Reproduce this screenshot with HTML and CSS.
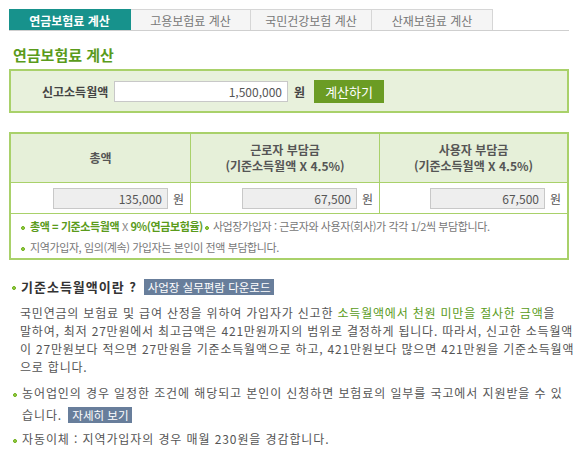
FILE: index.html
```html
<!DOCTYPE html>
<html lang="ko">
<head>
  <meta charset="UTF-8">
  <title>연금보험료 계산</title>
  <link rel="stylesheet" href="styles.css">
</head>
<body>
  <div class="wrap">
    <ul class="tabs">
      <li class="on">연금보험료 계산</li>
      <li>고용보험료 계산</li>
      <li class="wide">국민건강보험 계산</li>
      <li class="wide">산재보험료 계산</li>
    </ul>

    <h2 class="title">연금보험료 계산</h2>

    <div class="calc-box">
      <span class="calc-label">신고소득월액</span>
      <input type="text" class="calc-input" value="1,500,000">
      <span class="unit bold">원</span>
      <button class="btn-calc">계산하기</button>
    </div>

    <table class="result">
      <tr>
        <th class="c1">총액</th>
        <th class="c2">근로자 부담금<br>(기준소득월액 X 4.5%)</th>
        <th class="c3">사용자 부담금<br>(기준소득월액 X 4.5%)</th>
      </tr>
      <tr class="vals">
        <td><input type="text" class="out" value="135,000" readonly><span class="unit">원</span></td>
        <td><input type="text" class="out" value="67,500" readonly><span class="unit">원</span></td>
        <td><input type="text" class="out" value="67,500" readonly><span class="unit">원</span></td>
      </tr>
      <tr>
        <td colspan="3" class="notes">
          <p><span class="dot"></span><b class="green">총액 = 기준소득월액 <span class="x">X</span> 9%(연금보험율)</b><span class="dot inline"></span>사업장가입자 : 근로자와 사용자(회사)가 각각 1/2씩 부담합니다.</p>
          <p><span class="dot"></span>지역가입자, 임의(계속) 가입자는 본인이 전액 부담합니다.</p>
        </td>
      </tr>
    </table>

    <div class="info">
      <h3><span class="dot"></span>기준소득월액이란 ? <a class="btn-slate">사업장 실무편람 다운로드</a></h3>
      <p class="desc">국민연금의 보험료 및 급여 산정을 위하여 가입자가 신고한 <span class="green">소득월액에서 천원 미만을 절사한 금액</span>을<br>말하여, 최저 27만원에서 최고금액은 421만원까지의 범위로 결정하게 됩니다. 따라서, 신고한 소득월액<br>이 27만원보다 적으면 27만원을 기준소득월액으로 하고, 421만원보다 많으면 421만원을 기준소득월액<br>으로 합니다.</p>
      <ul class="bullets">
        <li><span class="dot"></span>농어업인의 경우 일정한 조건에 해당되고 본인이 신청하면 보험료의 일부를 국고에서 지원받을 수 있습니다. <a class="btn-slate">자세히 보기</a></li>
        <li><span class="dot"></span>자동이체 : 지역가입자의 경우 매월 230원을 경감합니다.</li>
      </ul>
    </div>
  </div>
</body>
</html>
```

FILE: styles.css
```css
body {
  margin: 0;
  font-family: "Noto Sans CJK KR", "Noto Sans", sans-serif;
  font-size: 12px;
  color: #555;
  background: #fff;
}
.wrap {
  width: 560px;
  padding: 9px 0 0 9px;
}
.tabs {
  display: flex;
  margin: 0;
  padding: 0;
  list-style: none;
  border-bottom: 1px solid #cfcfcf;
  height: 21px;
}
.tabs li {
  width: 120px;
  height: 21px;
  line-height: 21px;
  text-align: center;
  background: #f5f5f5;
  border: 1px solid #d6d6d6;
  border-left: none;
  border-bottom: none;
  box-sizing: border-box;
  color: #777;
  font-size: 12px;
}
.tabs li.wide {
  width: 121px;
}
.tabs li.on {
  width: 122px;
  background: #17928c;
  border-color: #17928c;
  color: #fff;
  font-weight: bold;
}
.title {
  margin: 13px 0 0 4px;
  height: 25px;
  line-height: 22px;
  font-size: 15px;
  color: #5a9b1b;
}
.calc-box {
  height: 40px;
  border: 2px solid #a9d16a;
  background: #e8f1dc;
  display: flex;
  align-items: center;
}
.calc-label {
  font-weight: bold;
  color: #444;
  margin-left: 31px;
  width: 64px;
  white-space: nowrap;
}
.calc-input {
  margin-left: 8px;
  width: 174px;
  height: 21px;
  box-sizing: border-box;
  border: 1px solid #c8c8c8;
  text-align: right;
  padding: 0 5px;
  font-family: inherit;
  font-size: 12px;
  color: #555;
}
.unit {
  margin-left: 6px;
  color: #555;
}
.bold {
  font-weight: bold;
  color: #444;
}
.btn-calc {
  margin-left: 9px;
  width: 70px;
  height: 23px;
  border: none;
  background: #6b9c24;
  color: #fff;
  font-family: inherit;
  font-size: 13px;
  padding: 0;
}
.result {
  margin-top: 19px;
  width: 560px;
  border-collapse: collapse;
  border: 2px solid #a9d16a;
}
.result th, .result td {
  border: 1px solid #a9d16a;
  padding: 0;
}
.result th {
  height: 48px;
  background: #e6f0d9;
  color: #555;
  font-size: 12px;
  line-height: 16px;
}
.result .c1 { width: 179px; }
.result .c2 { width: 188px; }
.vals td {
  height: 30px;
  text-align: right;
  padding-right: 6px;
}
.out {
  width: 115px;
  height: 21px;
  box-sizing: border-box;
  border: 1px solid #c8c8c8;
  background: #eee;
  text-align: right;
  padding: 0 5px;
  font-family: inherit;
  font-size: 12px;
  color: #555;
  vertical-align: middle;
}
.vals .unit {
  vertical-align: middle;
  margin-left: 5px;
}
.result .notes {
  height: 42px;
  padding: 2px 0 0 10px;
  text-align: left;
  vertical-align: top;
}
.notes p {
  margin: 0;
  line-height: 21px;
  font-size: 11px;
  letter-spacing: -0.4px;
  color: #777;
}
.dot {
  display: inline-block;
  width: 4px;
  height: 4px;
  border-radius: 50%;
  border: 1px solid #6aac14;
  background: #9ad04a;
  vertical-align: middle;
  margin-right: 5px;
  box-sizing: border-box;
}
.dot.inline {
  margin: 0 4px 0 2px;
}
.green {
  color: #5a9b1b;
}
.x {
  font-weight: normal;
  color: #888;
}
.info {
  margin-top: 18px;
}
.info h3 {
  margin: 0 0 0 3px;
  font-size: 13px;
  color: #333;
  letter-spacing: 1px;
  line-height: 18px;
}
.btn-slate {
  display: inline-block;
  background: #687e9b;
  color: #fff;
  font-weight: normal;
  letter-spacing: 0;
  font-size: 11.5px;
  padding: 0 4px;
  line-height: 16px;
  margin-left: 2px;
  text-indent: 0;
}
.desc {
  margin: 8px 0 0 11px;
  line-height: 18px;
  font-size: 12px;
  letter-spacing: 0.8px;
  white-space: nowrap;
  color: #555;
}
.bullets {
  list-style: none;
  margin: 6px 0 0 0;
  padding: 0 0 0 4px;
}
.bullets li {
  line-height: 22px;
  padding-left: 9px;
  text-indent: -9px;
  letter-spacing: 0.9px;
  margin-bottom: 2px;
}
```
